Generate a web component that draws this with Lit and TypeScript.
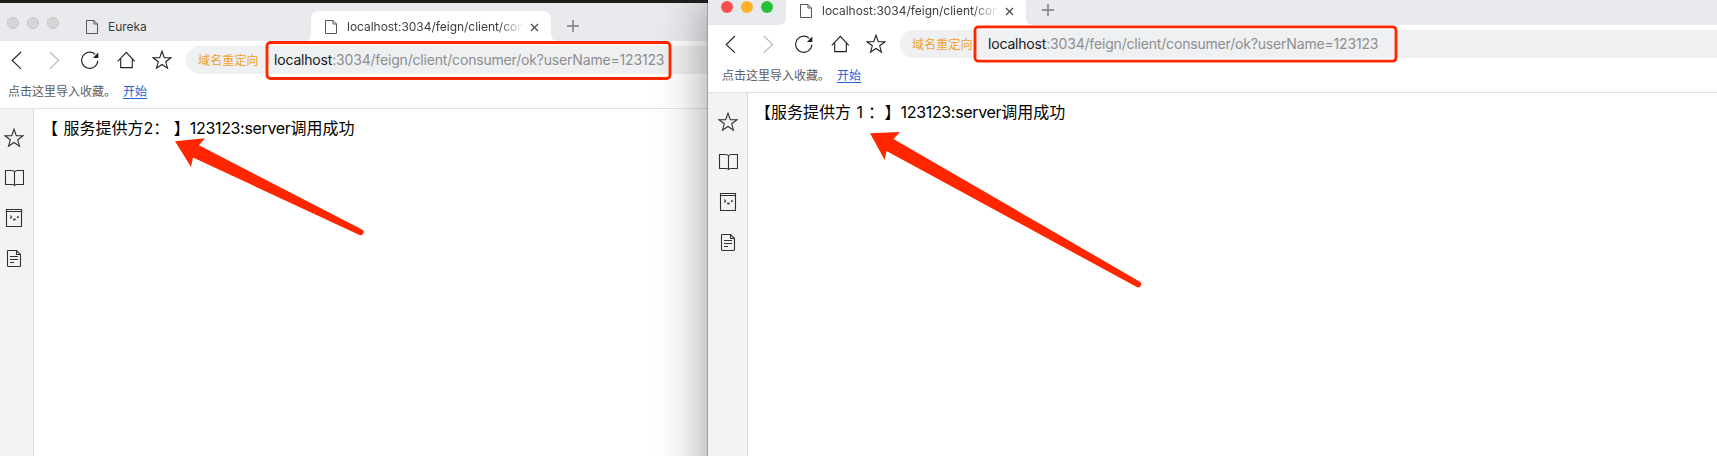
import { LitElement, html, css, svg, nothing } from "lit";
import { customElement, property } from "lit/decorators.js";

const STAR = "M10 1.2 L12.3 7.6 L18.9 7.8 L13.7 11.8 L15.5 18.2 L10 14.5 L4.5 18.2 L6.3 11.8 L1.1 7.8 L7.7 7.6 Z";

const icons: Record<string, unknown> = {
  back: svg`<path d="M14 2 L5.2 10.5 L14 18.8"/>`,
  forward: svg`<path d="M5.8 2 L14.6 10.5 L5.8 18.8"/>`,
  reload: svg`<path d="M15.2 4.3 A8.1 8.1 0 1 0 17.8 10.8"/><path d="M18.3 2.6 V8 H12.9 Z" fill="currentColor" stroke="none"/>`,
  home: svg`<path d="M1.8 11.4 L10.3 2.4 L18.8 11.4 M4.7 9 V17.6 H16.3 V9"/>`,
  star: svg`<path d=${STAR}/>`,
  book: svg`<path d="M10.5 4 C10 2.8 9 2.5 7.5 2.5 H1.5 V16.5 H8 C9.5 16.5 10.5 16.8 10.5 18 C10.5 16.8 11.5 16.5 13 16.5 H19.5 V2.5 H13.5 C12 2.5 11 2.8 10.5 4 V18"/>`,
  notes: svg`<path d="M2.5 1.5 H17.5 V18.5 H2.5 Z M2.5 3.5 H17.5"/><path d="M6.3 7.5 L7.6 9 L6.3 10.6"/><path d="M13 8.3 h1.6 v1.6 h-1.6 z M8.8 10.8 h3.2 l-.8 1.8 h-1.6 z" fill="currentColor" stroke="none"/>`,
  page: svg`<path d="M3.5 3 Q3.5 2.5 4.5 2.5 H12.5 L16.5 6.5 V17.5 Q16.5 18.5 15.5 18.5 H4.5 Q3.5 18.5 3.5 17.5 Z M12.5 2.5 V6.5 H16.5 M6 8.5 H14 M6 11.5 H14 M6 14.5 H10"/>`,
};

const icon = (name: string) => html`<svg viewBox="0 0 20 20" width="20" height="20" fill="none" stroke="currentColor" stroke-width="1.1">${icons[name]}</svg>`;

@customElement("browser-tab")
class BrowserTab extends LitElement {
  @property() label = "";
  @property({ type: Boolean, reflect: true }) active = false;

  static styles = css`
    :host { display: block; flex: none; width: 239px; height: 30px; }
    :host([active]) { width: 240px; }
    .tab { display: flex; align-items: center; height: 30px; box-sizing: border-box; padding: 2px 11px 0 14px; border-radius: 8px 8px 0 0; position: relative; }
    :host([active]) .tab { background: #fff; }
    :host([active]) .tab::before, :host([active]) .tab::after { content: ""; position: absolute; bottom: 0; width: 6px; height: 6px; }
    .tab::before { left: -6px; background: radial-gradient(circle at 0 0, transparent 5.5px, #fff 6px); }
    .tab::after { right: -6px; background: radial-gradient(circle at 100% 0, transparent 5.5px, #fff 6px); }
    .file { flex: none; width: 12px; height: 14px; color: #54565a; }
    .label { flex: none; width: 175px; margin-left: 10px; overflow: hidden; white-space: nowrap; font: 12px/16px Inter, "Liberation Sans", sans-serif; letter-spacing: -0.03px; color: #3b3d41; }
    :host([active]) .label { -webkit-mask-image: linear-gradient(90deg, #000 150px, transparent 177px); mask-image: linear-gradient(90deg, #000 150px, transparent 177px); }
    .close { flex: none; width: 9px; height: 9px; margin-left: 8px; color: #505256; }
  `;

  render() {
    return html`<div class="tab">
      <svg class="file" viewBox="0 0 12 14" fill="none" stroke="currentColor"><path d="M.5 .5 H8 L11.5 4 V13.5 H.5 Z M8 .5 V4 H11.5"/></svg>
      <span class="label">${this.label}</span>
      ${this.active ? html`<svg class="close" viewBox="0 0 9 9" stroke="currentColor" stroke-width="1.4"><path d="M1 1 L8 8 M8 1 L1 8"/></svg>` : nothing}
    </div>`;
  }
}

@customElement("browser-window")
class BrowserWindow extends LitElement {
  @property({ attribute: false }) tabs: string[] = [];
  @property({ type: Boolean, reflect: true }) focused = false;

  static styles = css`
    :host { display: flex; flex-direction: column; background: #fff; font-family: Inter, "Noto Sans CJK SC", sans-serif; }
    .strip { display: flex; align-items: flex-end; height: 38px; background: #e8eaed; }
    .lights { display: flex; flex: none; gap: 8px; width: 65px; height: 12px; padding: 0 0 12px 13px; }
    .light { width: 12px; height: 12px; box-sizing: border-box; border-radius: 50%; background: #d5d6d6; border: 1px solid #c5c6c7; }
    :host([focused]) .light { border: none; }
    :host([focused]) .red { background: #fc4f4b; }
    :host([focused]) .amber { background: #fcb128; }
    :host([focused]) .green { background: #25c138; }
    .add { width: 12px; height: 12px; margin: 0 0 9px 16px; color: #77797d; }
    .bar { display: flex; align-items: center; height: 38px; color: #1f2022; }
    .nav { display: flex; align-items: center; height: 20px; padding: 0 0 0 13px; width: 192px; box-sizing: border-box; flex: none; }
    .nav svg { display: block; flex: none; }
    .fwd { margin-left: 17px; color: #b4b5b7; }
    .rl, .hm, .st { margin-left: 16px; }
    .address { flex: 1; display: flex; align-items: center; height: 28px; border-radius: 14px 0 0 14px; background: #eff0f2; white-space: nowrap; }
    .tag { width: 82px; padding-left: 12px; box-sizing: border-box; font: 12px/18px "Noto Sans CJK SC", sans-serif; color: #eda22c; letter-spacing: 0.15px; }
    .url { margin-left: 6px; font-size: 14px; line-height: 20px; color: #8c8e90; letter-spacing: -0.18px; }
    .host { color: #16181a; }
    .favs { display: flex; gap: 7px; height: 29px; padding: 0 0 0 14px; font: 12px/23px "Noto Sans CJK SC", sans-serif; color: #5a5c5f; border-bottom: 1px solid #e0e1e2; }
    .link { color: #1b66d2; text-decoration: underline; text-underline-offset: 2px; }
    .body { flex: 1; display: flex; }
    .side { display: flex; flex-direction: column; gap: 20px; width: 40px; box-sizing: border-box; padding: 19px 0 0 10px; background: #f3f3f3; border-right: 1px solid #dedede; color: #303134; flex: none; }
    .side svg { display: block; }
    .page { flex: 1; padding: 7px 0 0 7px; }
  `;

  render() {
    return html`
      <div class="strip">
        <div class="lights"><i class="light red"></i><i class="light amber"></i><i class="light green"></i></div>
        ${this.tabs.map((t, i) => html`<browser-tab .label=${t} ?active=${i === this.tabs.length - 1}></browser-tab>`)}
        <svg class="add" viewBox="0 0 12 12" stroke="currentColor" stroke-width="1.4"><path d="M6 0 V12 M0 6 H12"/></svg>
      </div>
      <div class="bar">
        <div class="nav">${icon("back")}<span class="fwd">${icon("forward")}</span><span class="rl">${icon("reload")}</span><span class="hm">${icon("home")}</span><span class="st">${icon("star")}</span></div>
        <div class="address"><span class="tag">域名重定向</span><span class="url"><span class="host">localhost</span>:3034/feign/client/consumer/ok?userName=123123</span></div>
      </div>
      <div class="favs"><span>点击这里导入收藏。</span><span class="link">开始</span></div>
      <div class="body">
        <div class="side">${["star", "book", "notes", "page"].map(icon)}</div>
        <div class="page"><slot></slot></div>
      </div>`;
  }
}

@customElement("app-root")
class AppRoot extends LitElement {
  static styles = css`
    :host { display: block; position: relative; width: 1717px; height: 456px; overflow: hidden; background: #211f1d; }
    .win { position: absolute; }
    .first { left: -6px; top: 3px; width: 900px; height: 600px; }
    .second { left: 708px; top: -13px; width: 1100px; height: 620px; box-shadow: 0 0 0 1px rgba(0,0,0,.2), 0 14px 46px rgba(0,0,0,.42); }
    .reply { display: flex; white-space: pre; font: 16px/24px Inter, "Noto Sans CJK SC", sans-serif; color: #000; }
    .latin { letter-spacing: -0.33px; }
    .open { margin: 0 1px 0 1px; }
    .digit { margin-left: 1px; }
    .colon { font-family: "Noto Sans CJK TC", sans-serif; width: 17px; text-align: right; }
    .marks { position: absolute; left: 0; top: 0; }
  `;

  render() {
    const address = "localhost:3034/feign/client/consumer/ok?userName=123123";
    return html`
      <browser-window class="win first" .tabs=${["Eureka", address]}>
        <div class="reply"><span class="open">【 </span><span>服务提供方2：</span><span> 】</span><span class="latin">123123:server</span><span>调用成功</span></div>
      </browser-window>
      <browser-window class="win second" focused .tabs=${[address]}>
        <div class="reply"><span>【服务提供方</span><span class="digit"> 1</span><span class="colon" lang="zh-TW">：</span><span> 】</span><span class="latin">123123:server</span><span>调用成功</span></div>
      </browser-window>
      <svg class="marks" width="1717" height="456" fill="#ff2600">
        <g fill="none" stroke="#ff2600" stroke-width="2.8">
          <rect x="267" y="42.5" width="403" height="36" rx="3.5"/>
          <rect x="975" y="26.8" width="421" height="34.4" rx="3.5"/>
        </g>
        <path d="M175 141.3 L205 138.3 L199 145.3 L361.5 229.3 A2.8 2.8 0 0 1 359.5 235 L193 157.5 L191 167 Z"/>
        <path d="M870 133.3 L900 132 L893.5 139 L1139.5 281.5 A2.8 2.8 0 0 1 1136.8 287 L886.5 151 L884.7 160 Z"/>
      </svg>`;
  }
}
